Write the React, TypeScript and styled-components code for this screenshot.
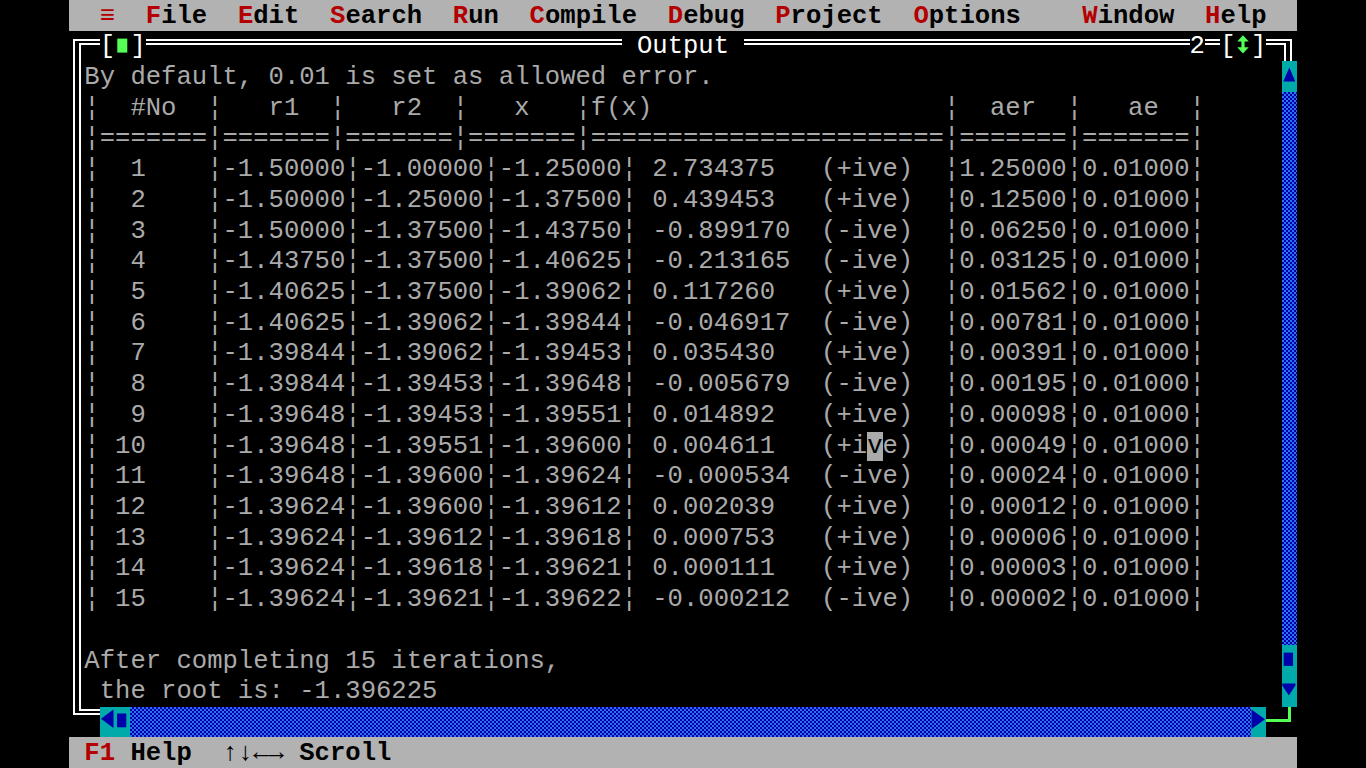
import styled, { createGlobalStyle, css } from "styled-components";

const CW = 15.35;
const RH = 30.72;
const COLS = 78;

const WHITE = "#ffffff";
const GREY = "#aaaaaa";
const CYAN = "#00aaaa";
const BLUE = "#0000aa";
const GREEN = "#55ff55";
const RED = "#b40000";

type Row = { no: number; r1: string; r2: string; x: string; fx: string; aer: string };

const rows: Row[] = [
  { no: 1, r1: "-1.50000", r2: "-1.00000", x: "-1.25000", fx: "2.734375", aer: "1.25000" },
  { no: 2, r1: "-1.50000", r2: "-1.25000", x: "-1.37500", fx: "0.439453", aer: "0.12500" },
  { no: 3, r1: "-1.50000", r2: "-1.37500", x: "-1.43750", fx: "-0.899170", aer: "0.06250" },
  { no: 4, r1: "-1.43750", r2: "-1.37500", x: "-1.40625", fx: "-0.213165", aer: "0.03125" },
  { no: 5, r1: "-1.40625", r2: "-1.37500", x: "-1.39062", fx: "0.117260", aer: "0.01562" },
  { no: 6, r1: "-1.40625", r2: "-1.39062", x: "-1.39844", fx: "-0.046917", aer: "0.00781" },
  { no: 7, r1: "-1.39844", r2: "-1.39062", x: "-1.39453", fx: "0.035430", aer: "0.00391" },
  { no: 8, r1: "-1.39844", r2: "-1.39453", x: "-1.39648", fx: "-0.005679", aer: "0.00195" },
  { no: 9, r1: "-1.39648", r2: "-1.39453", x: "-1.39551", fx: "0.014892", aer: "0.00098" },
  { no: 10, r1: "-1.39648", r2: "-1.39551", x: "-1.39600", fx: "0.004611", aer: "0.00049" },
  { no: 11, r1: "-1.39648", r2: "-1.39600", x: "-1.39624", fx: "-0.000534", aer: "0.00024" },
  { no: 12, r1: "-1.39624", r2: "-1.39600", x: "-1.39612", fx: "0.002039", aer: "0.00012" },
  { no: 13, r1: "-1.39624", r2: "-1.39612", x: "-1.39618", fx: "0.000753", aer: "0.00006" },
  { no: 14, r1: "-1.39624", r2: "-1.39618", x: "-1.39621", fx: "0.000111", aer: "0.00003" },
  { no: 15, r1: "-1.39624", r2: "-1.39621", x: "-1.39622", fx: "-0.000212", aer: "0.00002" },
];

// places text at screen columns (col 1 = first column inside the window)
function layout(parts: [number, string][]) {
  const line = Array(COLS).fill(" ");
  parts.forEach(([col, text]) => {
    [...text].forEach((ch, i) => {
      line[col - 1 + i] = ch;
    });
  });
  return line.join("").replace(/\s+$/, "");
}

const headerLine = layout([
  [1, "¦"], [4, "#No"], [9, "¦"], [13, "r1"], [17, "¦"], [21, "r2"], [25, "¦"],
  [29, "x"], [33, "¦"], [34, "f(x)"], [57, "¦"], [60, "aer"], [65, "¦"], [69, "ae"], [73, "¦"],
]);

const ruleLine = (() => {
  const bars = [1, 9, 17, 25, 33, 57, 65, 73];
  let s = "";
  for (let c = 1; c <= 73; c++) s += bars.includes(c) ? "¦" : "=";
  return s;
})();

const dataLine = (r: Row) =>
  layout([
    [1, "¦"], [5 - String(r.no).length, String(r.no)], [9, "¦"], [10, r.r1], [18, "¦"],
    [19, r.r2], [27, "¦"], [28, r.x], [36, "¦"], [38, r.fx],
    [49, r.fx.startsWith("-") ? "(-ive)" : "(+ive)"],
    [57, "¦"], [58, r.aer], [65, "¦"], [66, "0.01000"], [73, "¦"],
  ]);

const CURSOR_ROW = 10;
const CURSOR_COL = 52;

export default function App() {
  return (
    <>
      <GlobalStyle />
      <Screen>
        <MenuBar>
          {"  "}
          <Hot>≡</Hot>
          {"  "}
          {["File", "Edit", "Search", "Run", "Compile", "Debug", "Project", "Options"].map((m) => (
            <span key={m}>
              <Hot>{m[0]}</Hot>
              {m.slice(1)}
              {"  "}
            </span>
          ))}
          {"  "}
          <Hot>W</Hot>indow{"  "}
          <Hot>H</Hot>elp
        </MenuBar>

        <Window>
          <TitleRow>
            <CornerTL>
              <OuterTL>
                <InnerTL />
              </OuterTL>
            </CornerTL>
            <HRule $cols={1} />
            <TitleText>[</TitleText>
            <IconCell>
              <svg width={CW} height={RH} viewBox={`0 0 ${CW} ${RH}`}>
                <rect x="2.3" y="7.6" width="10" height="14" fill={GREEN} />
              </svg>
            </IconCell>
            <TitleText>]</TitleText>
            <HRule $cols={31} />
            <TitleText> Output </TitleText>
            <HRule $cols={29} />
            <TitleText>2</TitleText>
            <HRule $cols={1} />
            <TitleText>[</TitleText>
            <IconCell>
              <svg width={CW} height={RH} viewBox={`0 0 ${CW} ${RH}`}>
                <path
                  d="M7 4.3 L12.7 10.5 L8.6 10.5 L8.6 16.2 L12.7 16.2 L7 22.4 L1.2 16.2 L5.4 16.2 L5.4 10.5 L1.2 10.5 Z"
                  fill={GREEN}
                />
              </svg>
            </IconCell>
            <TitleText>]</TitleText>
            <HRule $cols={1} />
            <CornerTR>
              <OuterTR>
                <InnerTR />
              </OuterTR>
            </CornerTR>
          </TitleRow>

          <Body>
            <VLine />
            <Content>
              <Line>By default, 0.01 is set as allowed error.</Line>
              <Line>{headerLine}</Line>
              <Line>{ruleLine}</Line>
              {rows.map((r) => {
                const text = dataLine(r);
                if (r.no !== CURSOR_ROW) return <Line key={r.no}>{text}</Line>;
                return (
                  <Line key={r.no}>
                    {text.slice(0, CURSOR_COL - 1)}
                    <Cursor>{text[CURSOR_COL - 1]}</Cursor>
                    {text.slice(CURSOR_COL)}
                  </Line>
                );
              })}
              <Line />
              <Line>After completing 15 iterations,</Line>
              <Line> the root is: -1.396225</Line>
            </Content>
            <VScroll>
              <ScrollButton>
                <svg width={CW} height={RH} viewBox={`0 0 ${CW} ${RH}`}>
                  <polygon points="7.3,6.6 13.3,20.6 1.3,20.6" fill={BLUE} />
                </svg>
              </ScrollButton>
              <Track />
              <ScrollButton>
                <svg width={CW} height={RH} viewBox={`0 0 ${CW} ${RH}`}>
                  <rect x="1.7" y="7.6" width="9.4" height="13.3" fill={BLUE} />
                </svg>
              </ScrollButton>
              <ScrollButton>
                <svg width={CW} height={RH} viewBox={`0 0 ${CW} ${RH}`}>
                  <polygon points="0.3,7.5 13.4,7.5 13.4,9.5 6.8,19.4 0.3,9.5" fill={BLUE} />
                </svg>
              </ScrollButton>
            </VScroll>
          </Body>

          <BottomRow>
            <CornerBL>
              <OuterBL>
                <InnerBL />
              </OuterBL>
            </CornerBL>
            <HRuleLow />
            <ScrollButton $cols={1}>
              <svg width={CW} height={RH} viewBox={`0 0 ${CW} ${RH}`}>
                <polygon points="1,11.8 13.5,2.5 13.5,21" fill={BLUE} />
              </svg>
            </ScrollButton>
            <ScrollButton $cols={1}>
              <svg width={CW} height={RH} viewBox={`0 0 ${CW} ${RH}`}>
                <rect x="2" y="6.5" width="9.3" height="13.8" fill={BLUE} />
              </svg>
            </ScrollButton>
            <HTrack />
            <ScrollButton $cols={1}>
              <svg width={CW} height={RH} viewBox={`0 0 ${CW} ${RH}`}>
                <polygon points="0.5,2.5 14,12.3 0.5,22" fill={BLUE} />
              </svg>
            </ScrollButton>
            <ResizeRule />
            <ResizeCorner />
          </BottomRow>
        </Window>

        <StatusBar>
          {" "}
          <Hot>F1</Hot> Help{"  "}↑↓←→ Scroll
        </StatusBar>
      </Screen>
    </>
  );
}

const GlobalStyle = createGlobalStyle`
  html, body {
    margin: 0;
    padding: 0;
    background: #000;
    overflow: hidden;
  }
`;

const checker = css`
  background-color: ${BLUE};
  background-image: repeating-conic-gradient(${BLUE} 0 25%, #2f72f0 0 50%);
  background-size: 4px 4px;
`;

const Screen = styled.div`
  display: flex;
  flex-direction: column;
  width: ${80 * CW}px;
  height: ${25 * RH}px;
  margin: 0 auto;
  background: #000;
  color: ${GREY};
  font-family: "Liberation Mono", "DejaVu Sans Mono", monospace;
  font-size: 25.58px;
  line-height: ${RH}px;
  white-space: pre;
`;

const MenuBar = styled.div`
  box-sizing: border-box;
  height: ${RH}px;
  padding-top: 1.5px;
  flex: none;
  background: #b2b2b2;
  color: #000;
  font-weight: bold;
`;

const Hot = styled.span`
  color: ${RED};
`;

const StatusBar = styled(MenuBar)``;

const Window = styled.div`
  display: flex;
  flex-direction: column;
  height: ${23 * RH}px;
  flex: none;
`;

const TitleRow = styled.div`
  display: flex;
  align-items: flex-start;
  height: ${RH}px;
  flex: none;
`;

const TitleText = styled.span`
  flex: none;
  padding-top: 1.5px;
  color: ${WHITE};
`;

const HRule = styled.div<{ $cols: number }>`
  flex: none;
  width: ${(p) => p.$cols * CW}px;
  height: 2px;
  margin-top: 8.6px;
  border-top: 2px solid ${WHITE};
  border-bottom: 2px solid ${WHITE};
`;

const HRuleLow = styled(HRule).attrs({ $cols: 1 })`
  margin-top: 2.5px;
`;

const IconCell = styled.span`
  display: flex;
  flex: none;
  width: ${CW}px;
  height: ${RH}px;
`;

const CornerTL = styled.div`
  display: flex;
  flex-direction: column;
  flex: none;
  width: ${CW}px;
  height: ${RH}px;
`;

const OuterTL = styled.div`
  display: flex;
  flex-direction: column;
  flex: 1;
  margin: 8.6px 0 0 3.5px;
  border-top: 2px solid ${WHITE};
  border-left: 2px solid ${WHITE};
`;

const InnerTL = styled.div`
  flex: 1;
  margin: 2px 0 0 4px;
  border-top: 2px solid ${WHITE};
  border-left: 2px solid ${WHITE};
`;

const CornerTR = styled(CornerTL)``;

const OuterTR = styled.div`
  display: flex;
  flex-direction: column;
  flex: 1;
  margin: 8.6px 4.85px 0 0;
  border-top: 2px solid ${WHITE};
  border-right: 2px solid ${WHITE};
`;

const InnerTR = styled.div`
  flex: 1;
  margin: 2px 4.5px 0 0;
  border-top: 2px solid ${WHITE};
  border-right: 2px solid ${WHITE};
`;

const Body = styled.div`
  display: flex;
  height: ${21 * RH}px;
  flex: none;
`;

const VLine = styled.div`
  flex: none;
  width: ${CW}px;
  background: linear-gradient(
    to right,
    transparent 3.5px,
    ${WHITE} 3.5px,
    ${WHITE} 5.5px,
    transparent 5.5px,
    transparent 9.5px,
    ${WHITE} 9.5px,
    ${WHITE} 11.5px,
    transparent 11.5px
  );
`;

const Content = styled.div`
  display: flex;
  flex-direction: column;
  width: ${COLS * CW}px;
  flex: none;
`;

const Line = styled.div`
  box-sizing: border-box;
  height: ${RH}px;
  padding-top: 1.5px;
  flex: none;
`;

const Cursor = styled.span`
  background: ${GREY};
  color: #000;
`;

const VScroll = styled.div`
  display: flex;
  flex-direction: column;
  flex: none;
  width: ${CW}px;
`;

const ScrollButton = styled.div<{ $cols?: number }>`
  display: flex;
  flex: none;
  width: ${(p) => (p.$cols ?? 1) * CW}px;
  height: ${RH}px;
  background: ${CYAN};
`;

const Track = styled.div`
  flex: 1;
  ${checker};
`;

const BottomRow = styled.div`
  display: flex;
  align-items: flex-start;
  height: ${RH}px;
  flex: none;
`;

const CornerBL = styled.div`
  flex: none;
  width: ${CW}px;
  height: ${RH}px;
`;

const OuterBL = styled.div`
  box-sizing: border-box;
  height: 8.5px;
  margin-left: 3.5px;
  border-left: 2px solid ${WHITE};
  border-bottom: 2px solid ${WHITE};
`;

const InnerBL = styled.div`
  box-sizing: border-box;
  height: 4.5px;
  margin-left: 4px;
  border-left: 2px solid ${WHITE};
  border-bottom: 2px solid ${WHITE};
`;

const HTrack = styled.div`
  flex: none;
  width: ${73 * CW}px;
  height: ${RH}px;
  ${checker};
`;

const ResizeRule = styled.div`
  flex: none;
  width: ${CW}px;
  height: 3px;
  margin-top: 12.4px;
  background: ${GREEN};
`;

const ResizeCorner = styled.div`
  flex: none;
  box-sizing: border-box;
  width: 9px;
  height: 15.4px;
  border-right: 3px solid ${GREEN};
  border-bottom: 3px solid ${GREEN};
`;
